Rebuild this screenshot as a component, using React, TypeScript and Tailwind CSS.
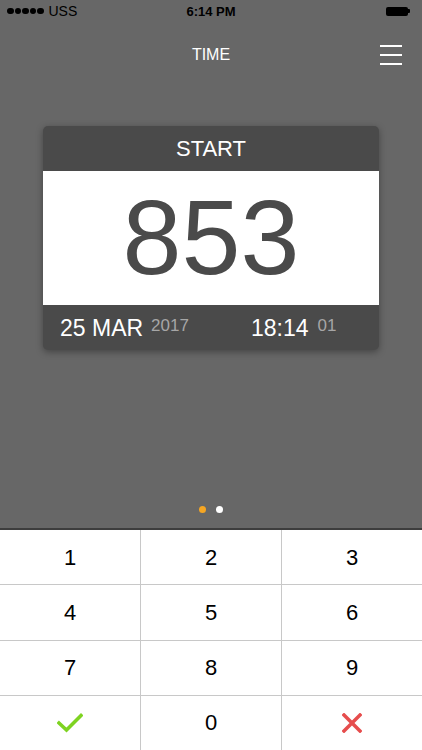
import React from "react";

const font = { fontFamily: '"Liberation Sans", Arial, sans-serif' };

function Check() {
  return (
    <svg width="26" height="20" viewBox="0 0 26 20">
      <path d="M2 10 L9.5 17 L24 2.5" fill="none" stroke="#7ed321" strokeWidth="3.5" strokeLinecap="square" />
    </svg>
  );
}

function Cross() {
  return (
    <svg width="20" height="20" viewBox="0 0 20 20">
      <path d="M2 2 L18 18 M18 2 L2 18" fill="none" stroke="#e64d4d" strokeWidth="3.5" strokeLinecap="square" />
    </svg>
  );
}

export default function App() {
  const keys: React.ReactNode[] = ["1", "2", "3", "4", "5", "6", "7", "8", "9", <Check key="c" />, "0", <Cross key="x" />];
  return (
    <div className="w-[422px] h-[750px] flex flex-col bg-[#676767] overflow-hidden" style={font}>
      {/* status bar */}
      <div className="h-[22px] relative flex items-center px-[7px] text-black">
        <div className="flex items-center gap-[1px]">
          {[0, 1, 2, 3, 4].map((i) => (
            <span key={i} className="w-[6.5px] h-[6.5px] rounded-full bg-black" />
          ))}
        </div>
        <span className="ml-[5px] text-[14px] leading-none">USS</span>
        <span className="absolute left-0 right-0 text-center text-[13px] font-bold leading-none top-[5px] pointer-events-none">6:14 PM</span>
        <div className="ml-auto flex items-center mr-[5px]">
          <div className="w-[22px] h-[9px] rounded-[2px] bg-black" />
          <div className="w-[2px] h-[4px] bg-black rounded-r-[1px]" />
        </div>
      </div>
      {/* nav */}
      <div className="h-[66px] relative flex items-center justify-center">
        <span className="text-white text-[16px] leading-none">TIME</span>
        <div className="absolute right-[20px] top-[23px] flex flex-col gap-[7px]">
          <span className="block w-[22px] h-[2px] bg-white" />
          <span className="block w-[22px] h-[2px] bg-white" />
          <span className="block w-[22px] h-[2px] bg-white" />
        </div>
      </div>
      {/* card */}
      <div className="mx-[43px] mt-[38px] rounded-[5px] overflow-hidden bg-[#4a4a4a] shadow-[0_2px_7px_rgba(0,0,0,0.35)]">
        <div className="h-[45px] flex items-center justify-center text-white text-[22px]">START</div>
        <div className="h-[134px] bg-white flex items-center justify-center text-[#4a4a4a] text-[106px] leading-none pb-[2px]">853</div>
        <div className="h-[45px] flex items-center text-white">
          <div className="w-[168px] pl-[17px] flex items-start">
            <span className="text-[23px] leading-none mt-[2px]">25 MAR</span>
            <span className="text-[17px] leading-none ml-[8px] text-[#a6a6a6] mt-[2px]">2017</span>
          </div>
          <div className="flex items-start pl-[40px]">
            <span className="text-[23px] leading-none mt-[2px]">18:14</span>
            <span className="text-[17px] leading-none ml-[9px] text-[#a6a6a6] mt-[2px]">01</span>
          </div>
        </div>
      </div>
      <div className="flex-1" />
      {/* page dots */}
      <div className="flex justify-center gap-[10px] mb-[15px]">
        <span className="w-[7px] h-[7px] rounded-full bg-[#f5a623]" />
        <span className="w-[7px] h-[7px] rounded-full bg-white" />
      </div>
      {/* keypad */}
      <div className="h-[222px] border-t-2 border-[#3d3d3d] bg-[#c8c8c8] grid grid-cols-3 grid-rows-4 gap-px">
        {keys.map((k, i) => (
          <div key={i} className="bg-white flex items-center justify-center text-black text-[22px]">
            {k}
          </div>
        ))}
      </div>
    </div>
  );
}
